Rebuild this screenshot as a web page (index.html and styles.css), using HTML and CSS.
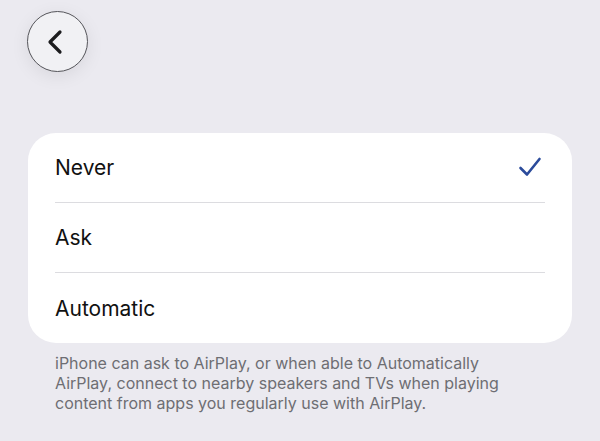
FILE: index.html
```html
<!DOCTYPE html>
<html lang="en">
<head>
    <meta charset="UTF-8">
    <meta name="viewport" content="width=device-width, initial-scale=1.0">
    <title>AirPlay</title>
    <link rel="stylesheet" href="styles.css">
</head>
<body>
    <header class="topo">
        <button class="btn-voltar" aria-label="Back">
            <svg width="20" height="28" viewBox="0 0 20 28">
                <path d="M14 4 L4 14 L14 24" fill="none" stroke="#1c1c1e" stroke-width="3.2" stroke-linecap="round" stroke-linejoin="round"/>
            </svg>
        </button>
    </header>
    <main>
        <ul class="lista">
            <li class="item">
                <span>Never</span>
                <svg class="check" width="24" height="22" viewBox="0 0 24 22">
                    <path d="M2.5 12 L9 18.5 L21.5 3" fill="none" stroke="#2b4b9b" stroke-width="2.6" stroke-linecap="round" stroke-linejoin="round"/>
                </svg>
            </li>
            <li class="item"><span>Ask</span></li>
            <li class="item"><span>Automatic</span></li>
        </ul>
        <p class="nota">iPhone can ask to AirPlay, or when able to Automatically AirPlay, connect to nearby speakers and TVs when playing content from apps you regularly use with AirPlay.</p>
    </main>
</body>
</html>
```

FILE: styles.css
```css
body {
    margin: 0;
    padding: 0;
    background-color: #ebeaf0;
    font-family: "Inter", "Liberation Sans", sans-serif;
    color: #111;
    height: 441px;
    overflow: hidden;
}

.topo {
    padding: 11px 0 0 27px;
    height: 80px;
}

.btn-voltar {
    width: 61px;
    height: 61px;
    border-radius: 50%;
    border: 1px solid #55555a;
    background-color: #f1f1f4;
    box-shadow: 0 4px 18px rgba(0, 0, 0, 0.08);
    display: flex;
    align-items: center;
    justify-content: center;
    padding: 0;
    padding-right: 4px;
}

main {
    padding: 42px 28px 0 28px;
}

.lista {
    list-style: none;
    margin: 0;
    padding: 0 27px;
    background-color: #fff;
    border-radius: 28px;
}

.item {
    height: 69px;
    display: flex;
    align-items: center;
    justify-content: space-between;
    padding-right: 3px;
    font-size: 21px;
    border-bottom: 1px solid #dcdce0;
}

.item:last-child {
    border-bottom: none;
    height: 70px;
}

.check {
    margin-top: -2px;
}

.nota {
    margin: 10px 0 0 27px;
    width: 460px;
    font-size: 16px;
    line-height: 20px;
    color: #6e6e73;
}
```
